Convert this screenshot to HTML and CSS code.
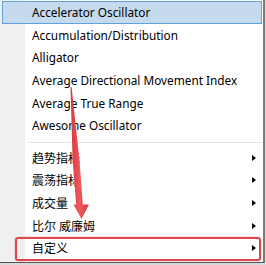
FILE: index.html
```html
<!DOCTYPE html>
<html lang="zh">
<head>
<meta charset="utf-8">
<link rel="stylesheet" href="styles.css">
</head>
<body>
<div class="screen">
  <div class="menu">
    <ul class="list">
      <li class="item latin active"><span class="label">Accelerator Oscillator</span></li>
      <li class="item latin"><span class="label">Accumulation/Distribution</span></li>
      <li class="item latin"><span class="label">Alligator</span></li>
      <li class="item latin"><span class="label">Average Directional Movement Index</span></li>
      <li class="item latin"><span class="label">Average True Range</span></li>
      <li class="item latin"><span class="label">Awesome Oscillator</span></li>
      <li class="sep"></li>
      <li class="item sub"><span class="label">趋势指标</span><span class="caret"></span></li>
      <li class="item sub"><span class="label">震荡指标</span><span class="caret"></span></li>
      <li class="item sub"><span class="label">成交量</span><span class="caret"></span></li>
      <li class="item sub"><span class="label">比尔 威廉姆</span><span class="caret"></span></li>
      <li class="item sub"><span class="label">自定义</span><span class="caret"></span></li>
    </ul>
  </div>
  <div class="mark-box"></div>
  <svg class="mark-arrow" width="266" height="265" viewBox="0 0 266 265" aria-hidden="true">
    <defs>
      <linearGradient id="ag" x1="0" y1="0" x2="1" y2="0">
        <stop offset="0" stop-color="#d9363d"/>
        <stop offset="0.5" stop-color="#ec5a5e"/>
        <stop offset="1" stop-color="#d9363d"/>
      </linearGradient>
    </defs>
    <polygon fill="url(#ag)" points="70.5,87 71.6,87 79.5,160 82.8,204.5 89,204.5 81.5,219 73.5,204.5 76.2,204.5 72.6,160"/>
  </svg>
</div>
</body>
</html>
```

FILE: styles.css
```css
html, body {
  margin: 0;
  padding: 0;
  background: #ffffff;
}

.screen {
  position: relative;
  width: 266px;
  height: 265px;
  overflow: hidden;
  background: #d9d9d9;
}

.menu {
  width: 263px;
  height: 262px;
  border-right: 2px solid #7d7d7d;
  border-bottom: 1px solid #555555;
  background: linear-gradient(to right, #f0f0f0 0, #f0f0f0 25px, #ffffff 25px);
  box-sizing: content-box;
}

.list {
  list-style: none;
  margin: 0;
  padding: 1px 1px 0 2px;
}

.item {
  position: relative;
  display: flex;
  align-items: center;
  height: 22.6px;
  box-sizing: border-box;
  padding-left: 30px;
  font-family: "Noto Sans", "Noto Sans CJK SC", sans-serif;
  font-size: 12px;
  color: #000000;
  white-space: nowrap;
}

.item.latin {
  font-size: 11.8px;
}

.item.active {
  background: #c6daee;
  border: 1px solid #5ea2de;
  padding-left: 29px;
}

.label {
  flex: 1;
}

.sep {
  height: 1px;
  margin: 5px 0 4px 26px;
  background: #e4e4e4;
}

.caret {
  width: 0;
  height: 0;
  margin-right: 6px;
  border-top: 3.5px solid transparent;
  border-bottom: 3.5px solid transparent;
  border-left: 4px solid #000000;
}

.mark-box {
  position: absolute;
  left: 15px;
  top: 237px;
  width: 246px;
  height: 24px;
  box-sizing: border-box;
  border: 2.5px solid #e0464c;
  border-radius: 3px;
  box-shadow: 0 0 1.5px rgba(224, 70, 76, 0.6);
}

.mark-arrow {
  position: absolute;
  left: 0;
  top: 0;
  pointer-events: none;
}
```
